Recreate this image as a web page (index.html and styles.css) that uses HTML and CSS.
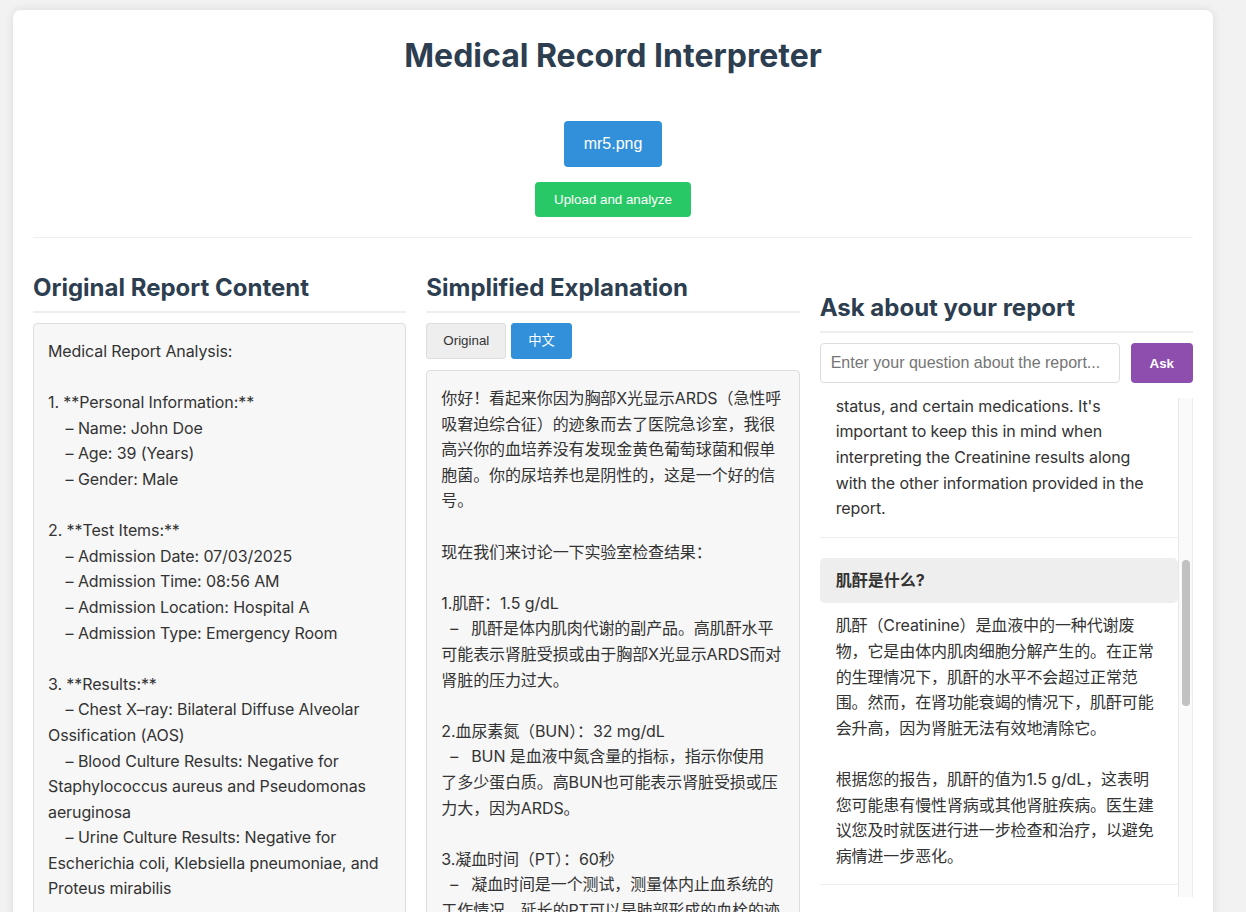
FILE: index.html
```html
<!DOCTYPE html>
<html lang="en">
<head>
<meta charset="utf-8">
<title>Medical Record Interpreter</title>
<link rel="stylesheet" href="styles.css">
</head>
<body>
<div class="container">
  <header class="header">
    <h1 class="title">Medical Record Interpreter</h1>
    <div class="upload">
      <label class="file-btn">mr5.png</label>
      <button class="analyze-btn">Upload and analyze</button>
    </div>
  </header>

  <main class="columns">
    <section class="col">
      <h2 class="col-title">Original Report Content</h2>
      <div class="panel">Medical Report Analysis:

1. **Personal Information:**
    – Name: John Doe
    – Age: 39 (Years)
    – Gender: Male

2. **Test Items:**
    – Admission Date: 07/03/2025
    – Admission Time: 08:56 AM
    – Admission Location: Hospital A
    – Admission Type: Emergency Room

3. **Results:**
    – Chest X–ray: Bilateral Diffuse Alveolar Ossification (AOS)
    – Blood Culture Results: Negative for Staphylococcus aureus and Pseudomonas aeruginosa
    – Urine Culture Results: Negative for Escherichia coli, Klebsiella pneumoniae, and Proteus mirabilis

4. **Laboratory Tests:**
    – Creatinine: 1.5 g/dL
    – Blood Urea Nitrogen (BUN): 32 mg/dL
    – Prothrombin Time (PT): 60 seconds</div>
    </section>

    <section class="col">
      <h2 class="col-title">Simplified Explanation</h2>
      <div class="tabs">
        <button class="tab">Original</button>
        <button class="tab active">中文</button>
      </div>
      <div class="panel panel-cn">你好！看起来你因为胸部X光显示ARDS（急性呼
吸窘迫综合征）的迹象而去了医院急诊室，我很
高兴你的血培养没有发现金黄色葡萄球菌和假单
胞菌。你的尿培养也是阴性的，这是一个好的信
号。

现在我们来讨论一下实验室检查结果：

1.肌酐：1.5 g/dL
  –   肌酐是体内肌肉代谢的副产品。高肌酐水平
可能表示肾脏受损或由于胸部X光显示ARDS而对
肾脏的压力过大。

2.血尿素氮（BUN）：32 mg/dL
  –   BUN 是血液中氮含量的指标，指示你使用
了多少蛋白质。高BUN也可能表示肾脏受损或压
力大，因为ARDS。

3.凝血时间（PT）：60秒
  –   凝血时间是一个测试，测量体内止血系统的
工作情况。延长的PT可以是肺部形成的血栓的迹
象。</div>
    </section>

    <section class="col col-ask">
      <h2 class="col-title">Ask about your report</h2>
      <div class="ask-row">
        <input class="ask-input" type="text" placeholder="Enter your question about the report...">
        <button class="ask-btn">Ask</button>
      </div>
      <div class="chat">
        <div class="chat-scroll" id="chat">
          <div class="msg">
            <div class="q">What is the normal range for Creatinine?</div>
            <div class="a">The normal range for Creatinine in adult males is typically about 0.7 to 1.3 mg/dL, and for adult females about 0.6 to 1.1 mg/dL. Ranges can vary slightly between laboratories, so always compare your result with the reference range printed on your report.</div>
          </div>
          <div class="msg">
            <div class="q">What is Creatinine?</div>
            <div class="a">Creatinine is a waste product made by your muscles. It is filtered out of the blood by the kidneys and removed in the urine, so its level is used to check how well the kidneys are working.

A higher than normal level may suggest that the kidneys are not filtering the blood as well as they should. Creatinine can also be affected by muscle mass, age, sex, hydration
<span id="anchor">status,</span> and certain medications. It's important to keep this in mind when interpreting the Creatinine results along with the other information provided in the report.</div>
          </div>
          <div class="msg">
            <div class="q">肌酐是什么?</div>
            <div class="a">肌酐（Creatinine）是血液中的一种代谢废物，它是由体内肌肉细胞分解产生的。在正常的生理情况下，肌酐的水平不会超过正常范围。然而，在肾功能衰竭的情况下，肌酐可能会升高，因为肾脏无法有效地清除它。

根据您的报告，肌酐的值为1.5 g/dL，这表明您可能患有慢性肾病或其他肾脏疾病。医生建议您及时就医进行进一步检查和治疗，以避免病情进一步恶化。</div>
          </div>
          <div class="msg">
            <div class="q">BUN偏高意味着什么？</div>
            <div class="a">血尿素氮（BUN）是蛋白质代谢后产生的废物，主要通过肾脏排出体外。BUN偏高可能说明肾脏的过滤功能下降，也可能与脱水、高蛋白饮食或消化道出血有关。

您的BUN为32 mg/dL，略高于正常范围。建议结合肌酐等其他指标一起评估，并遵医嘱复查。</div>
          </div>
          <div class="msg">
            <div class="q">凝血时间60秒正常吗？</div>
            <div class="a">凝血酶原时间（PT）的正常范围通常在11到13.5秒之间。60秒明显延长，说明血液凝固所需的时间比正常情况长很多，可能与肝功能异常、维生素K缺乏或服用抗凝药物有关。请尽快与医生沟通。</div>
          </div>
        </div>
        <div class="chat-track"><div class="chat-thumb"></div></div>
      </div>
    </section>
  </main>
</div>
<script src="script.js"></script>
</body>
</html>
```

FILE: styles.css
```css
html {
  scrollbar-width: none;
}
html::-webkit-scrollbar {
  display: none;
}
body {
  margin: 0;
  padding: 10px 13px;
  background: #f2f2f2;
  font-family: Inter, "Noto Sans CJK SC", sans-serif;
  color: #333;
}
.container {
  width: 1200px;
  box-sizing: border-box;
  background: #fff;
  border-radius: 8px;
  box-shadow: 0 0 10px rgba(0, 0, 0, 0.1);
  padding: 20px;
}
.header {
  text-align: center;
  padding-bottom: 20px;
  border-bottom: 1px solid #eee;
}
.title {
  margin: 8px 0 47px;
  font-family: Inter, sans-serif;
  font-size: 32px;
  line-height: 36px;
  font-weight: bold;
  color: #2c3e50;
}
.upload {
  display: flex;
  flex-direction: column;
  align-items: center;
  gap: 15px;
}
.file-btn {
  display: block;
  background: #3190d9;
  color: #fff;
  font-family: "Liberation Sans", Arial, sans-serif;
  font-size: 16px;
  line-height: 18px;
  padding: 14px 20px;
  border-radius: 4px;
}
.analyze-btn {
  background: #29c866;
  color: #fff;
  font-family: "Liberation Sans", Arial, sans-serif;
  font-size: 13.33px;
  line-height: 15px;
  padding: 10px 19px;
  border: none;
  border-radius: 4px;
}
.columns {
  display: grid;
  grid-template-columns: repeat(3, 1fr);
  gap: 20px;
  margin-top: 36px;
}
.col {
  min-width: 0;
}
.col-ask {
  padding-top: 20px;
}
.col-title {
  margin: 0 0 10px;
  font-family: Inter, sans-serif;
  font-size: 24px;
  line-height: 27px;
  font-weight: bold;
  color: #2c3e50;
  padding-bottom: 10px;
  border-bottom: 2px solid #eee;
}
.panel {
  background: #f7f7f7;
  border: 1px solid #ddd;
  border-radius: 4px;
  padding: 15px 10px 15px 14px;
  font-size: 16px;
  line-height: 1.6;
  letter-spacing: -0.1px;
  white-space: pre-wrap;
  color: #333;
}
.tabs {
  display: flex;
  gap: 5px;
  margin-bottom: 11px;
}
.tab {
  font-family: "Liberation Sans", Arial, sans-serif;
  font-size: 13.33px;
  line-height: 16px;
  padding: 9px 16px;
  border: 1px solid #ddd;
  background: #eee;
  color: #333;
  border-radius: 3px;
}
.tab.active {
  background: #3190d9;
  border-color: #3190d9;
  color: #fff;
  font-family: "Liberation Sans", "Noto Sans CJK SC", sans-serif;
}
.ask-row {
  display: flex;
  gap: 11px;
  margin-bottom: 15px;
}
.ask-input {
  flex: 1;
  min-width: 0;
  height: 40px;
  box-sizing: border-box;
  padding: 0 10px;
  border: 1px solid #ddd;
  border-radius: 4px;
  font-family: "Liberation Sans", Arial, sans-serif;
  font-size: 16px;
  color: #333;
}
.ask-input::placeholder {
  color: #757575;
}
.ask-btn {
  height: 40px;
  padding: 0 19px;
  background: #8e4ead;
  color: #fff;
  border: none;
  border-radius: 4px;
  font-family: "Liberation Sans", Arial, sans-serif;
  font-size: 13.33px;
  font-weight: bold;
}
.chat {
  display: flex;
  height: 499px;
}
.chat-scroll {
  flex: 1;
  min-width: 0;
  overflow: hidden;
}
.chat-track {
  flex: 0 0 15px;
  box-sizing: border-box;
  background: #fafafa;
  border-left: 1px solid #e8e8e8;
  border-right: 1px solid #ececec;
  padding-top: 162px;
}
.chat-thumb {
  width: 8px;
  height: 146px;
  margin-left: 3px;
  background: #c1c1c1;
  border-radius: 4px;
}
.msg {
  border-bottom: 1px solid #eee;
  margin-bottom: 20px;
}
.q {
  background: #eee;
  border-radius: 5px;
  padding: 10px 16px;
  font-size: 16px;
  line-height: 25.6px;
  font-weight: bold;
  color: #333;
}
.a {
  padding: 10px 16px 15px;
  font-size: 16px;
  line-height: 1.6;
  letter-spacing: -0.1px;
  white-space: pre-wrap;
  color: #333;
}
```

FILE: script.js
```js
(function () {
  function align() {
    var chat = document.getElementById('chat');
    var anchor = document.getElementById('anchor');
    if (!chat || !anchor) return;
    var d = anchor.getBoundingClientRect().top - chat.getBoundingClientRect().top;
    chat.scrollTop += d + 2;
  }
  align();
  window.addEventListener('load', align);
})();
```
